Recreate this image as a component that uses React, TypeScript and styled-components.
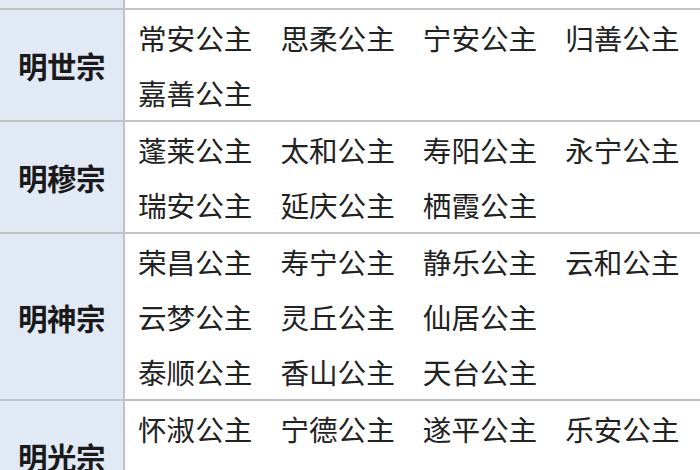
import React from "react";
import styled, { createGlobalStyle } from "styled-components";

const Global = createGlobalStyle`
  html, body { margin: 0; padding: 0; background: #ffffff; overflow: hidden; }
  body { font-family: "Noto Sans CJK SC", "Noto Sans", sans-serif; color: #1e1e1e; }
`;

const Table = styled.div`
  width: 700px;
  height: 470px;
  overflow: hidden;
  display: flex;
  flex-direction: column;
`;

const Row = styled.div<{ $top?: boolean }>`
  display: grid;
  grid-template-columns: 125px 1fr;
  border-top: ${(p) => (p.$top ? "none" : "2px solid #bfc2c7")};
  flex-shrink: 0;
`;

const NameCell = styled.div<{ $h?: number }>`
  background: #e1e9f5;
  border-right: 2px solid #bfc2c7;
  display: flex;
  align-items: center;
  justify-content: center;
  font-size: 29.5px;
  font-weight: 700;
  color: #1a1a1a;
  letter-spacing: -0.5px;
  height: ${(p) => (p.$h !== undefined ? `${p.$h}px` : "auto")};
`;

const ItemsCell = styled.div<{ $h?: number }>`
  padding-left: 13px;
  display: grid;
  grid-template-columns: repeat(4, 142.4px);
  grid-auto-rows: 55px;
  align-items: center;
  font-size: 28.6px;
  line-height: 55px;
  color: #222222;
  background: #ffffff;
  height: ${(p) => (p.$h !== undefined ? `${p.$h}px` : "auto")};
`;

const Item = styled.span`
  white-space: nowrap;
`;

const data: { name: string; items: string[] }[] = [
  { name: "明世宗", items: ["常安公主", "思柔公主", "宁安公主", "归善公主", "嘉善公主"] },
  { name: "明穆宗", items: ["蓬莱公主", "太和公主", "寿阳公主", "永宁公主", "瑞安公主", "延庆公主", "栖霞公主"] },
  {
    name: "明神宗",
    items: ["荣昌公主", "寿宁公主", "静乐公主", "云和公主", "云梦公主", "灵丘公主", "仙居公主", "", "泰顺公主", "香山公主", "天台公主"],
  },
  { name: "明光宗", items: ["怀淑公主", "宁德公主", "遂平公主", "乐安公主", "怀宁公主"] },
];

export default function App() {
  return (
    <>
      <Global />
      <Table>
        <Row $top>
          <NameCell $h={8} />
          <ItemsCell $h={8} />
        </Row>
        {data.map((r) => (
          <Row key={r.name}>
            <NameCell>{r.name}</NameCell>
            <ItemsCell>
              {r.items.map((it, i) => (
                <Item key={i}>{it}</Item>
              ))}
            </ItemsCell>
          </Row>
        ))}
      </Table>
    </>
  );
}
